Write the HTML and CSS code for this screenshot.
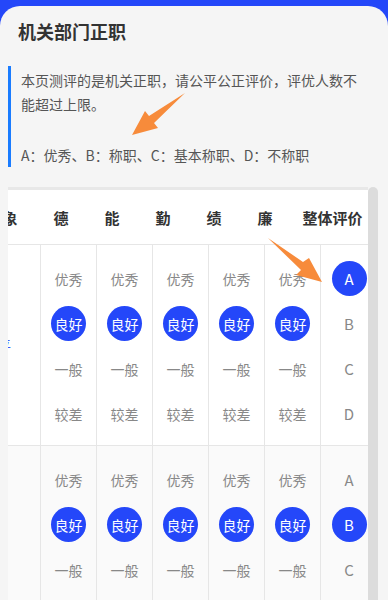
FILE: index.html
```html
<!DOCTYPE html>
<html lang="zh-CN">
<head>
    <meta charset="UTF-8">
    <meta name="viewport" content="width=device-width, initial-scale=1.0">
    <title>机关部门正职</title>
    <link rel="stylesheet" href="styles.css">
</head>
<body>
    <div class="card">
        <h1 class="title">机关部门正职</h1>

        <div class="notice">
            <p>本页测评的是机关正职，请公平公正评价，评优人数不能超过上限。</p>
            <p class="legend">A：优秀、B：称职、C：基本称职、D：不称职</p>
        </div>

        <div class="table-box">
            <div class="table">
                <div class="thead">
                    <div class="th th-name"><span>评价对象</span></div>
                    <div class="th">德</div>
                    <div class="th">能</div>
                    <div class="th">勤</div>
                    <div class="th">绩</div>
                    <div class="th">廉</div>
                    <div class="th th-total">整体评价</div>
                </div>

                <div class="row">
                    <div class="cell cell-name"><span class="name">王建平</span></div>
                    <div class="cell">
                        <span class="opt">优秀</span>
                        <span class="opt on">良好</span>
                        <span class="opt">一般</span>
                        <span class="opt">较差</span>
                    </div>
                    <div class="cell">
                        <span class="opt">优秀</span>
                        <span class="opt on">良好</span>
                        <span class="opt">一般</span>
                        <span class="opt">较差</span>
                    </div>
                    <div class="cell">
                        <span class="opt">优秀</span>
                        <span class="opt on">良好</span>
                        <span class="opt">一般</span>
                        <span class="opt">较差</span>
                    </div>
                    <div class="cell">
                        <span class="opt">优秀</span>
                        <span class="opt on">良好</span>
                        <span class="opt">一般</span>
                        <span class="opt">较差</span>
                    </div>
                    <div class="cell">
                        <span class="opt">优秀</span>
                        <span class="opt on">良好</span>
                        <span class="opt">一般</span>
                        <span class="opt">较差</span>
                    </div>
                    <div class="cell cell-total">
                        <span class="opt grade on">A</span>
                        <span class="opt grade">B</span>
                        <span class="opt grade">C</span>
                        <span class="opt grade">D</span>
                    </div>
                </div>

                <div class="row row-alt">
                    <div class="cell cell-name"></div>
                    <div class="cell">
                        <span class="opt">优秀</span>
                        <span class="opt on">良好</span>
                        <span class="opt">一般</span>
                        <span class="opt">较差</span>
                    </div>
                    <div class="cell">
                        <span class="opt">优秀</span>
                        <span class="opt on">良好</span>
                        <span class="opt">一般</span>
                        <span class="opt">较差</span>
                    </div>
                    <div class="cell">
                        <span class="opt">优秀</span>
                        <span class="opt on">良好</span>
                        <span class="opt">一般</span>
                        <span class="opt">较差</span>
                    </div>
                    <div class="cell">
                        <span class="opt">优秀</span>
                        <span class="opt on">良好</span>
                        <span class="opt">一般</span>
                        <span class="opt">较差</span>
                    </div>
                    <div class="cell">
                        <span class="opt">优秀</span>
                        <span class="opt on">良好</span>
                        <span class="opt">一般</span>
                        <span class="opt">较差</span>
                    </div>
                    <div class="cell cell-total">
                        <span class="opt grade">A</span>
                        <span class="opt grade on">B</span>
                        <span class="opt grade">C</span>
                        <span class="opt grade">D</span>
                    </div>
                </div>
            </div>
            <div class="scrollbar"></div>
        </div>
    </div>

    <!-- hint arrows -->
    <svg class="arrows" width="388" height="600" viewBox="0 0 388 600">
        <polygon points="185,93 154,123 158,128 132,135 145,111 149,116" />
        <polygon points="268,238 303,262 309,258 322,282 296,275 301,270" />
    </svg>
</body>
</html>
```

FILE: styles.css
```css
html, body {
    margin: 0;
    padding: 0;
    overflow: hidden;
}
body {
    background: #2447f9;
    padding-top: 6px;
    font-family: "Noto Sans CJK SC", sans-serif;
    color: #333;
}
.card {
    background: #f5f5f5;
    border-radius: 20px 20px 0 0;
    min-height: 700px;
    padding: 13px 8px 0;
}
.title {
    margin: 0;
    padding-left: 10px;
    font-size: 18px;
    line-height: 24px;
    font-weight: bold;
    color: #333;
}
.notice {
    margin-top: 23px;
    border-left: 3px solid #1a7cff;
    padding: 2px 10px 0 10px;
    font-size: 14px;
    line-height: 24px;
    color: #555;
}
.notice p {
    margin: 0;
}
.notice .legend {
    margin-top: 27px;
}
.table-box {
    display: flex;
    margin-top: 20px;
}
.table {
    width: 360px;
    border-top: 3px solid #e8e8e8;
    background: #fff;
    overflow: hidden;
}
.scrollbar {
    width: 10px;
    background: #dcdcdc;
    border-radius: 5px 5px 0 0;
}
.thead {
    display: flex;
    height: 54px;
    border-bottom: 1px solid #e6e6e6;
    font-size: 15px;
    font-weight: bold;
    color: #333;
}
.th {
    flex: none;
    width: 51px;
    display: flex;
    align-items: center;
    justify-content: center;
    white-space: nowrap;
}
.th-name {
    width: 27.5px;
    justify-content: flex-end;
    padding-right: 18px;
    box-sizing: border-box;
    overflow: hidden;
}
.th-total {
    width: 84px;
}
.row {
    display: flex;
    border-bottom: 1px solid #e6e6e6;
    background: #fff;
}
.row-alt {
    background: #fafafa;
}
.cell {
    flex: none;
    width: 55px;
    border-right: 1px solid #e6e6e6;
    display: flex;
    flex-direction: column;
    align-items: center;
    gap: 10px;
    padding: 16px 0 14px;
}
.cell-name {
    width: 33px;
    box-sizing: border-box;
    flex-direction: row;
    align-items: center;
    justify-content: flex-end;
    padding: 0 29px 0 0;
    overflow: hidden;
    white-space: nowrap;
}
.name {
    font-size: 14px;
    color: #3b5bff;
}
.cell-total {
    width: 56px;
    border-right: none;
}
.opt {
    width: 35px;
    height: 35px;
    border-radius: 50%;
    display: flex;
    align-items: center;
    justify-content: center;
    font-size: 14px;
    color: #888;
    white-space: nowrap;
}
.grade {
    font-size: 15px;
}
.opt.on {
    background: #2447f9;
    color: #fff;
}
.arrows {
    position: absolute;
    top: 0;
    left: 0;
    pointer-events: none;
}
.arrows polygon {
    fill: #f78b3b;
}
```
